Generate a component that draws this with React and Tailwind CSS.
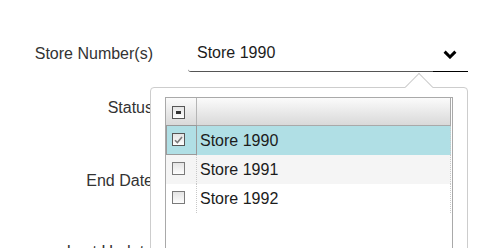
import React from "react";

function Box({ checked, dash, dark }) {
  return (
    <div
      className={`box-border w-[13px] h-[13px] border ${dark ? "border-[#555]" : "border-[#7a7a7a]"} bg-linear-to-b from-[#e4e4e4] to-[#fdfdfd] flex items-center justify-center`}
    >
      {dash && <div className="w-[5px] h-[3px] bg-[#333]" />}
      {checked && (
        <svg width="9" height="8" viewBox="0 0 9 8">
          <path d="M1 4.2 L3.4 6.6 L8 1" fill="none" stroke="#7b7b7b" strokeWidth="1.6" />
        </svg>
      )}
    </div>
  );
}

function Row({ label, bg, selected, checked, last }) {
  return (
    <div className={`flex h-[29px] w-[285px] ${bg}`}>
      <div className="relative w-[31px] h-[29px] box-border border-r border-dotted border-[#c8c8c8] pl-[6px] pt-[7px]">
        {selected && (
          <div className="absolute left-0 top-[-1px] w-[31px] h-[30px] box-border border border-[#9a9a9a]" />
        )}
        <Box checked={checked} dark={selected} />
      </div>
      <div className="flex-1 box-border border-r border-dotted border-[#c8c8c8] pl-[3px] leading-[29px] text-[16px] text-[#1c1c1c]">
        {label}
      </div>
    </div>
  );
}

export default function App() {
  return (
    <div className="relative w-[499px] h-[248px] overflow-hidden bg-white font-['Liberation_Sans',Arial,sans-serif] text-[16px] leading-[18px] text-[#333]">
      <div className="flex flex-col">
        <div className="flex mt-[44px]">
          <div className="w-[153px] text-right mt-[1px]">Store Number(s)</div>
          <div className="ml-[35px] w-[280px] h-[28px] flex">
            <div className="flex-1 box-border border-b border-[#555] rounded-bl-[3px] pl-[9px] text-[#1c1c1c]">
              Store 1990
            </div>
            <div className="w-[35px] box-border border-b border-black pl-[10px] pt-[6px]">
              <svg width="14" height="9" viewBox="0 0 14 9">
                <path d="M1.6 1.6 L7 7 L12.4 1.6" fill="none" stroke="#000" strokeWidth="3" />
              </svg>
            </div>
          </div>
        </div>
        <div className="w-[153px] text-right mt-[27px]">Status</div>
        <div className="w-[153px] text-right mt-[55px]">End Date</div>
        <div className="w-[153px] text-right mt-[53px]">Last Update</div>
      </div>

      <div className="absolute left-[150px] top-[87px] w-[318px] h-[200px] box-border border border-[#cdcdcd] rounded-[4px] bg-white">
        <div className="absolute left-[258px] top-[-11px] w-[20px] h-[20px] box-border bg-white border-t border-l border-[#cdcdcd] rotate-45" />
        <div className="relative ml-[14px] mt-[9px] w-[288px] h-[180px] box-border border border-[#a9a9a9] bg-white">
          <div className="flex h-[28px] w-[285px] box-border border-b border-r border-[#a9a9a9] bg-linear-to-b from-[#fbfbfb] to-[#d9d9d9]">
            <div className="w-[31px] box-border border-r border-[#b5b5b5] pl-[6px] pt-[8px]">
              <Box dash dark />
            </div>
            <div className="flex-1" />
          </div>
          <Row label="Store 1990" bg="bg-[#b0dfe5]" selected checked />
          <Row label="Store 1991" bg="bg-[#f5f5f5]" />
          <Row label="Store 1992" bg="bg-white" />
        </div>
      </div>
    </div>
  );
}
